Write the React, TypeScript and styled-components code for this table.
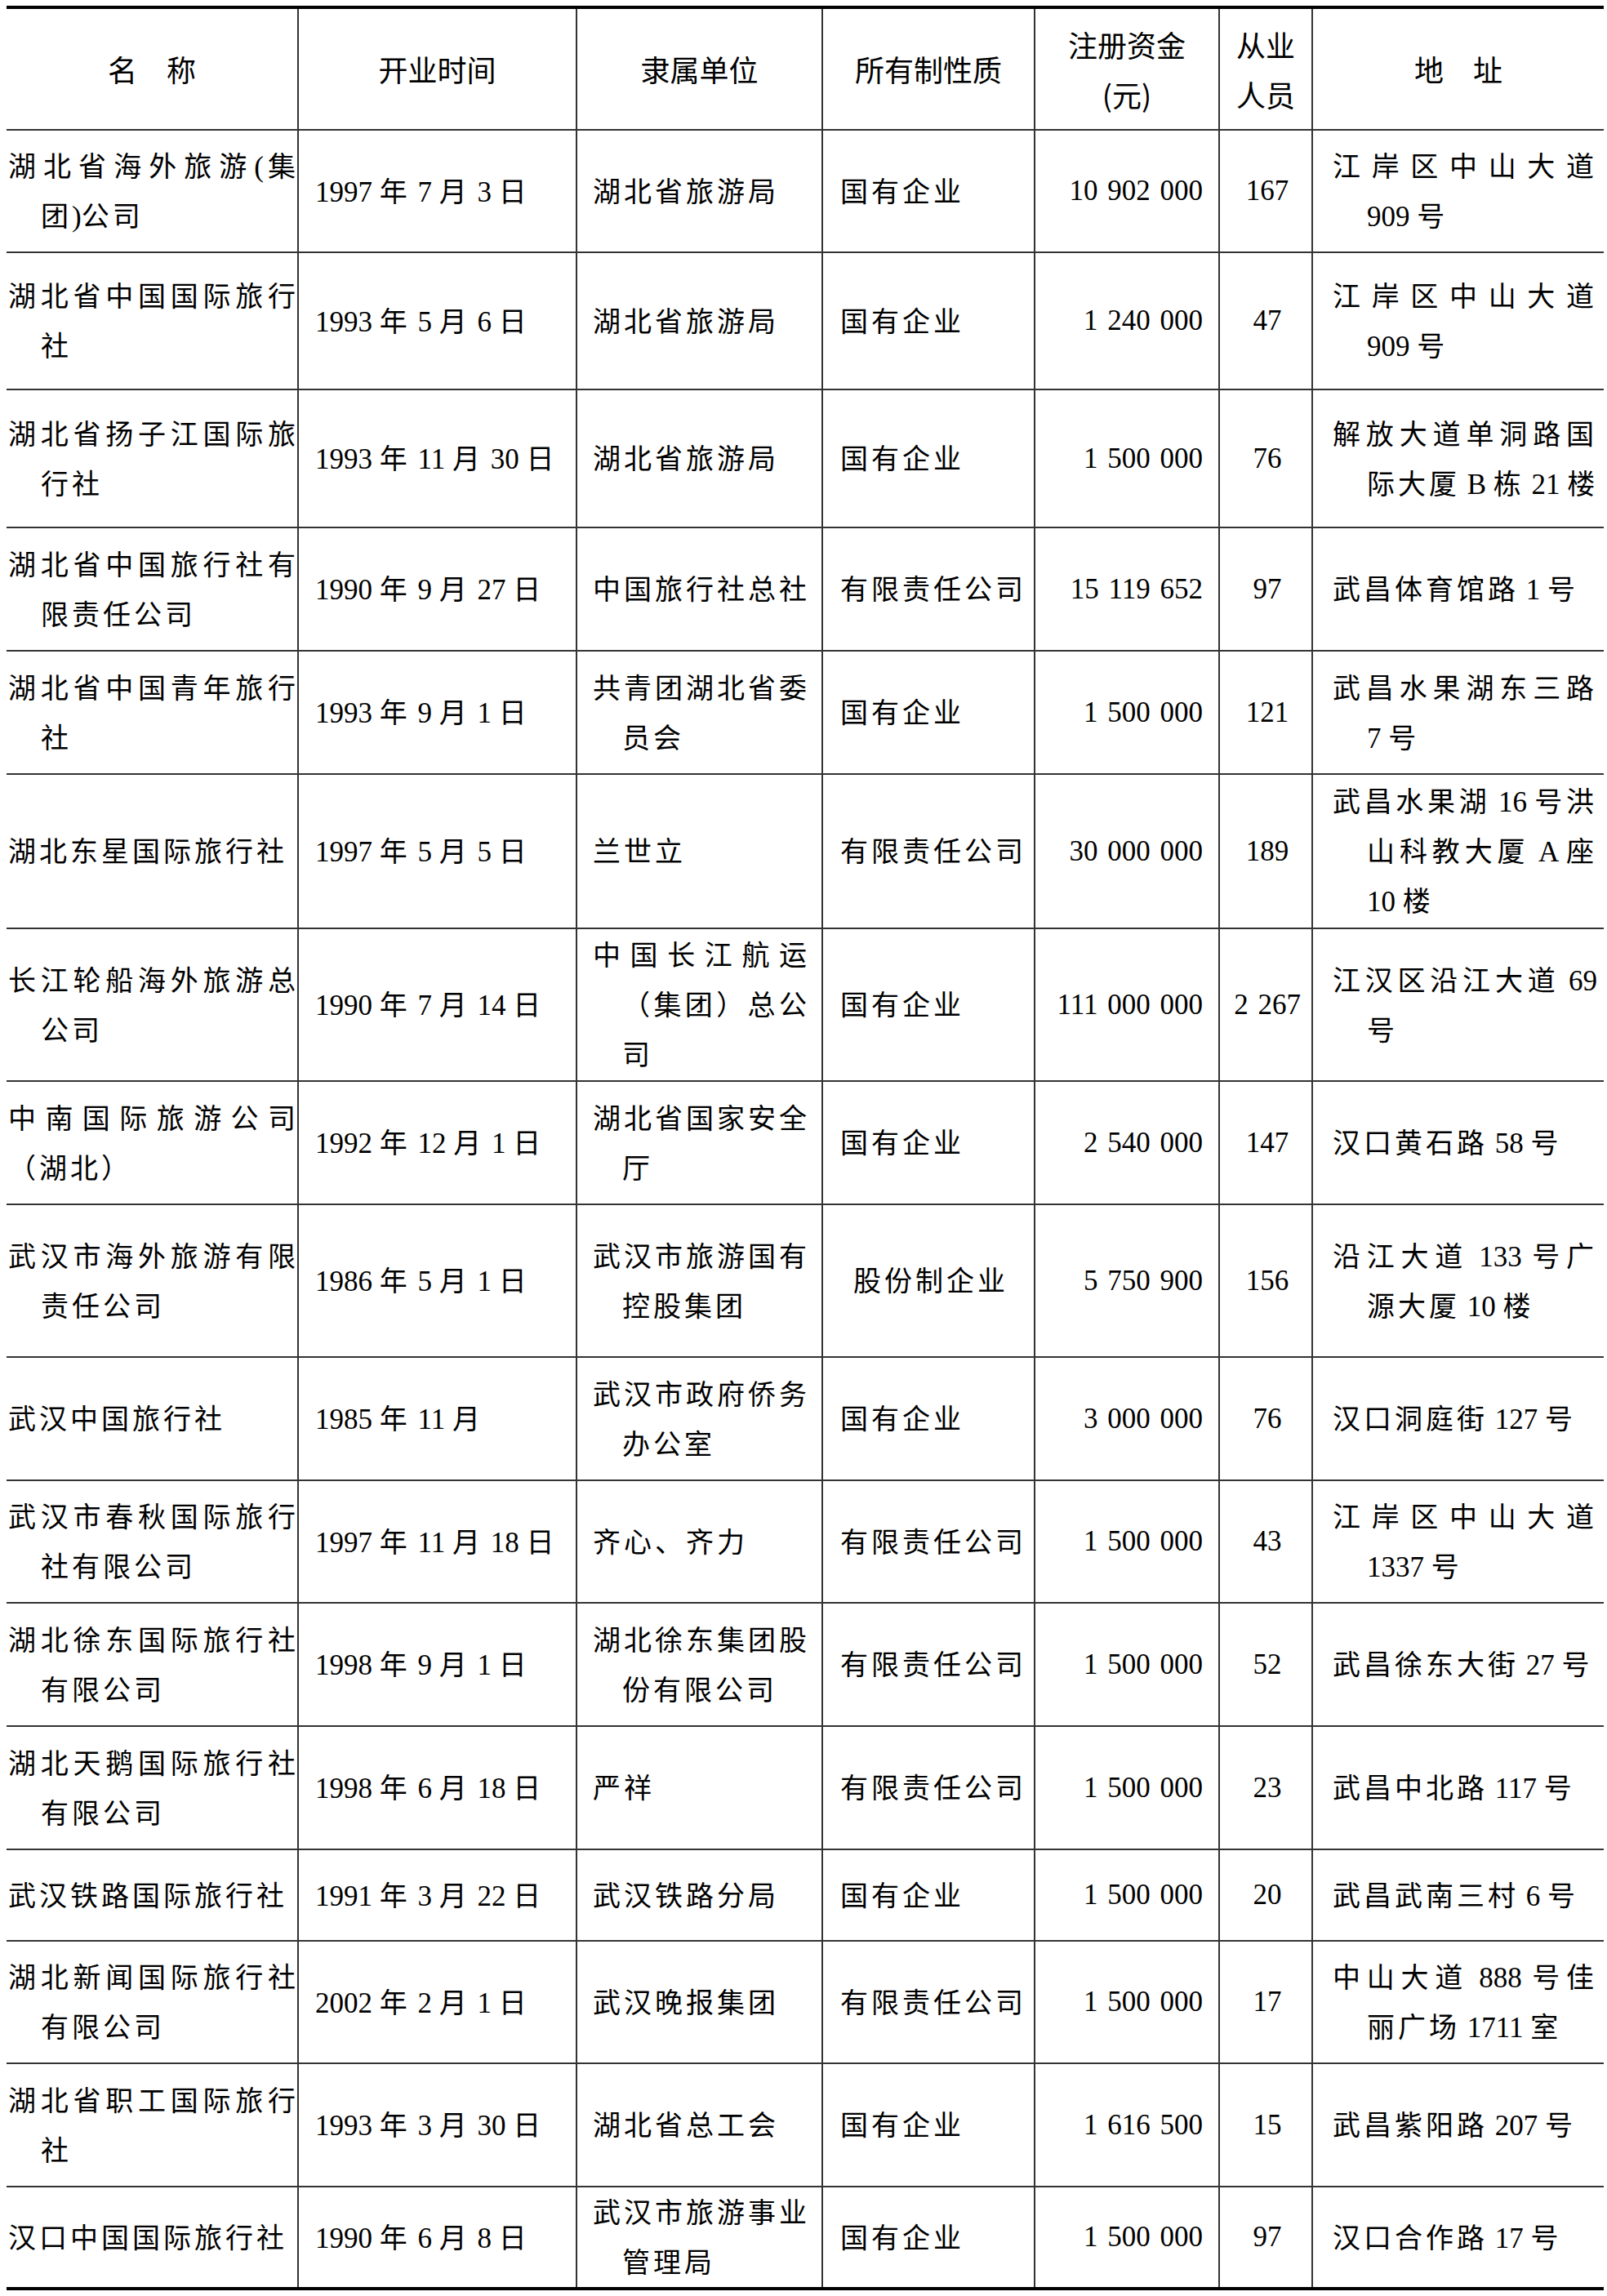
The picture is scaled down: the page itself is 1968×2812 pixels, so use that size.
import React from 'react';
import styled, { createGlobalStyle } from 'styled-components';

const GlobalStyle = createGlobalStyle`
  html, body {
    margin: 0;
    padding: 0;
    background: #fff;
  }
  body {
    font-family: "Liberation Serif", "Noto Sans CJK SC", serif;
    color: #000;
  }
`;

type Align = 'left' | 'right' | 'center';

interface Col {
  w: number;
  align: Align;
  pl: number;
  pr: number;
  indent: number;
  num?: boolean;
}

type CellValue = string | string[] | { lines: string[]; shift: number };

interface RowData {
  h: number;
  cells: CellValue[];
}

const cols: Col[] = [
  { w: 357, align: 'left', pl: 2, pr: 2, indent: 40 },
  { w: 341, align: 'left', pl: 20, pr: 4, indent: 0 },
  { w: 301, align: 'left', pl: 19, pr: 18, indent: 36 },
  { w: 260, align: 'left', pl: 21, pr: 4, indent: 0 },
  { w: 226, align: 'right', pl: 4, pr: 23, indent: 0, num: true },
  { w: 114, align: 'center', pl: 2, pr: 2, indent: 0, num: true },
  { w: 357, align: 'left', pl: 24, pr: 12, indent: 42 },
];

const headers: string[][] = [
  ['名　称'],
  ['开业时间'],
  ['隶属单位'],
  ['所有制性质'],
  ['注册资金', '(元)'],
  ['从业', '人员'],
  ['地　址'],
];

const rows: RowData[] = [
  {
    h: 150,
    cells: [
      ['湖北省海外旅游(集', '团)公司'],
      '1997 年 7 月 3 日',
      '湖北省旅游局',
      '国有企业',
      '10 902 000',
      '167',
      ['江岸区中山大道', '909 号'],
    ],
  },
  {
    h: 168,
    cells: [
      ['湖北省中国国际旅行', '社'],
      '1993 年 5 月 6 日',
      '湖北省旅游局',
      '国有企业',
      '1 240 000',
      '47',
      ['江岸区中山大道', '909 号'],
    ],
  },
  {
    h: 169,
    cells: [
      ['湖北省扬子江国际旅', '行社'],
      '1993 年 11 月 30 日',
      '湖北省旅游局',
      '国有企业',
      '1 500 000',
      '76',
      ['解放大道单洞路国', '际大厦 B 栋 21 楼'],
    ],
  },
  {
    h: 151,
    cells: [
      ['湖北省中国旅行社有', '限责任公司'],
      '1990 年 9 月 27 日',
      '中国旅行社总社',
      '有限责任公司',
      '15 119 652',
      '97',
      '武昌体育馆路 1 号',
    ],
  },
  {
    h: 151,
    cells: [
      ['湖北省中国青年旅行', '社'],
      '1993 年 9 月 1 日',
      ['共青团湖北省委', '员会'],
      '国有企业',
      '1 500 000',
      '121',
      ['武昌水果湖东三路', '7 号'],
    ],
  },
  {
    h: 189,
    cells: [
      '湖北东星国际旅行社',
      '1997 年 5 月 5 日',
      '兰世立',
      '有限责任公司',
      '30 000 000',
      '189',
      ['武昌水果湖 16 号洪', '山科教大厦 A 座', '10 楼'],
    ],
  },
  {
    h: 187,
    cells: [
      ['长江轮船海外旅游总', '公司'],
      '1990 年 7 月 14 日',
      ['中国长江航运', '（集团）总公', '司'],
      '国有企业',
      '111 000 000',
      '2 267',
      ['江汉区沿江大道 69', '号'],
    ],
  },
  {
    h: 151,
    cells: [
      { lines: ['中南国际旅游公司', '（湖北）'], shift: 0 },
      '1992 年 12 月 1 日',
      ['湖北省国家安全', '厅'],
      '国有企业',
      '2 540 000',
      '147',
      '汉口黄石路 58 号',
    ],
  },
  {
    h: 187,
    cells: [
      ['武汉市海外旅游有限', '责任公司'],
      '1986 年 5 月 1 日',
      ['武汉市旅游国有', '控股集团'],
      { lines: ['股份制企业'], shift: 16 },
      '5 750 900',
      '156',
      ['沿江大道 133 号广', '源大厦 10 楼'],
    ],
  },
  {
    h: 151,
    cells: [
      '武汉中国旅行社',
      '1985 年 11 月',
      ['武汉市政府侨务', '办公室'],
      '国有企业',
      '3 000 000',
      '76',
      '汉口洞庭街 127 号',
    ],
  },
  {
    h: 150,
    cells: [
      ['武汉市春秋国际旅行', '社有限公司'],
      '1997 年 11 月 18 日',
      '齐心、齐力',
      '有限责任公司',
      '1 500 000',
      '43',
      ['江岸区中山大道', '1337 号'],
    ],
  },
  {
    h: 151,
    cells: [
      ['湖北徐东国际旅行社', '有限公司'],
      '1998 年 9 月 1 日',
      ['湖北徐东集团股', '份有限公司'],
      '有限责任公司',
      '1 500 000',
      '52',
      '武昌徐东大街 27 号',
    ],
  },
  {
    h: 151,
    cells: [
      ['湖北天鹅国际旅行社', '有限公司'],
      '1998 年 6 月 18 日',
      '严祥',
      '有限责任公司',
      '1 500 000',
      '23',
      '武昌中北路 117 号',
    ],
  },
  {
    h: 112,
    cells: [
      '武汉铁路国际旅行社',
      '1991 年 3 月 22 日',
      '武汉铁路分局',
      '国有企业',
      '1 500 000',
      '20',
      '武昌武南三村 6 号',
    ],
  },
  {
    h: 150,
    cells: [
      ['湖北新闻国际旅行社', '有限公司'],
      '2002 年 2 月 1 日',
      '武汉晚报集团',
      '有限责任公司',
      '1 500 000',
      '17',
      ['中山大道 888 号佳', '丽广场 1711 室'],
    ],
  },
  {
    h: 151,
    cells: [
      ['湖北省职工国际旅行', '社'],
      '1993 年 3 月 30 日',
      '湖北省总工会',
      '国有企业',
      '1 616 500',
      '15',
      '武昌紫阳路 207 号',
    ],
  },
  {
    h: 122,
    cells: [
      '汉口中国国际旅行社',
      '1990 年 6 月 8 日',
      ['武汉市旅游事业', '管理局'],
      '国有企业',
      '1 500 000',
      '97',
      '汉口合作路 17 号',
    ],
  },
];

const Page = styled.div`
  width: 1968px;
  box-sizing: border-box;
  padding: 7px 4px 10px 8px;
`;

const Table = styled.table`
  width: 1956px;
  table-layout: fixed;
  border-collapse: collapse;
  border-top: 4px solid #000;
  border-bottom: 4px solid #000;
`;

const HeadRow = styled.tr`
  height: 150px;
`;

const Row = styled.tr<{ $h: number }>`
  height: ${(p) => p.$h}px;
`;

const HeadCell = styled.th<{ $first: boolean }>`
  padding: 0;
  font-weight: 400;
  font-family: "Liberation Serif", "Noto Sans CJK SC", serif;
  font-size: 36px;
  line-height: 61px;
  text-align: center;
  vertical-align: middle;
  border-bottom: 2px solid #333;
  border-left: ${(p) => (p.$first ? 'none' : '2px solid #333')};
`;

const HeadLine = styled.span`
  display: block;
  font-family: "Noto Sans CJK SC", sans-serif;
`;

const Cell = styled.td<{ $first: boolean; $align: Align; $pl: number; $pr: number; $num: boolean }>`
  padding: 0 ${(p) => p.$pr}px 0 ${(p) => p.$pl}px;
  font-size: 35px;
  line-height: 58px;
  text-align: ${(p) => p.$align};
  vertical-align: middle;
  word-spacing: ${(p) => (p.$num ? '3px' : '0')};
  border-bottom: 2px solid #333;
  border-left: ${(p) => (p.$first ? 'none' : '2px solid #333')};
`;

const Line = styled.span<{ $indent: number; $justify: boolean }>`
  display: block;
  padding-left: ${(p) => p.$indent}px;
  margin-right: -4px;
  white-space: ${(p) => (p.$justify ? 'normal' : 'nowrap')};
  text-align: ${(p) => (p.$justify ? 'justify' : 'inherit')};
  text-align-last: ${(p) => (p.$justify ? 'justify' : 'auto')};
`;

const Han = styled.span`
  font-family: "Noto Sans CJK SC", sans-serif;
  font-size: 34px;
  letter-spacing: 4px;
`;

const HAN = /([\u3000-\u303f\u4e00-\u9fff\uff00-\uffef]+)/;

function runs(text: string) {
  return text
    .split(HAN)
    .filter(Boolean)
    .map((part, i) =>
      HAN.test(part) ? <Han key={i}>{part}</Han> : <React.Fragment key={i}>{part}</React.Fragment>
    );
}

function CellBody({ value, col }: { value: CellValue; col: Col }) {
  let lines: string[];
  let shift = 0;
  if (typeof value === 'string') {
    lines = [value];
  } else if (Array.isArray(value)) {
    lines = value;
  } else {
    lines = value.lines;
    shift = value.shift;
  }
  // object cells keep their continuation lines flush (full-width parens carry their own gap)
  const flush = !Array.isArray(value) && typeof value !== 'string';
  return (
    <>
      {lines.map((line, i) => {
        const isLast = i === lines.length - 1;
        const indent = i === 0 ? shift : flush ? 0 : col.indent;
        return (
          <Line key={i} $indent={indent} $justify={lines.length > 1 && !isLast}>
            {runs(line)}
          </Line>
        );
      })}
    </>
  );
}

export default function App() {
  return (
    <Page>
      <GlobalStyle />
      <Table>
        <colgroup>
          {cols.map((c, i) => (
            <col key={i} style={{ width: c.w }} />
          ))}
        </colgroup>
        <thead>
          <HeadRow>
            {headers.map((h, i) => (
              <HeadCell key={i} $first={i === 0}>
                {h.map((t, j) => (
                  <HeadLine key={j}>{t}</HeadLine>
                ))}
              </HeadCell>
            ))}
          </HeadRow>
        </thead>
        <tbody>
          {rows.map((r, ri) => (
            <Row key={ri} $h={r.h}>
              {r.cells.map((c, ci) => (
                <Cell
                  key={ci}
                  $first={ci === 0}
                  $align={cols[ci].align}
                  $pl={cols[ci].pl}
                  $pr={cols[ci].pr}
                  $num={!!cols[ci].num}
                >
                  <CellBody value={c} col={cols[ci]} />
                </Cell>
              ))}
            </Row>
          ))}
        </tbody>
      </Table>
    </Page>
  );
}
